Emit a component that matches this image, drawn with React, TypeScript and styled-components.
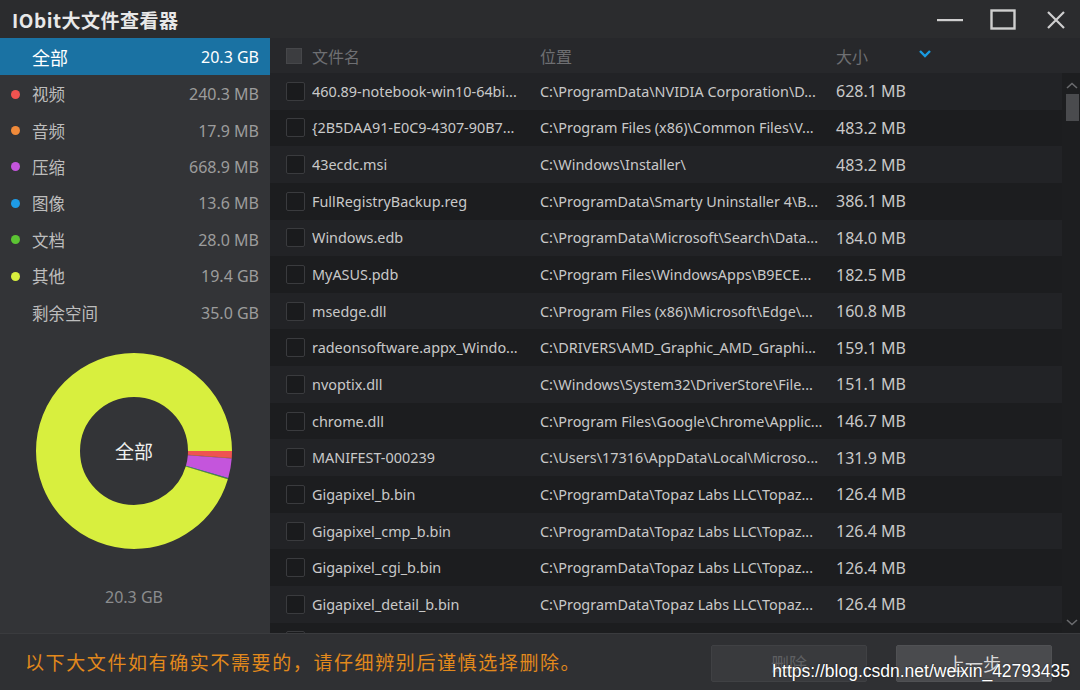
import React from 'react';
import styled, {createGlobalStyle} from 'styled-components';

const GlobalStyle = createGlobalStyle`
  html, body {
    margin: 0;
    padding: 0;
    background: #1d1e20;
  }
  * {
    box-sizing: border-box;
  }
`

const FONT = `"Noto Sans", "Noto Sans CJK SC", sans-serif`

type Category = { name: string, size: string, mb: number, color?: string }

const categories: Category[] = [
    {name: '视频', size: '240.3 MB', mb: 240.3, color: '#ef5350'},
    {name: '音频', size: '17.9 MB', mb: 17.9, color: '#f08a3a'},
    {name: '压缩', size: '668.9 MB', mb: 668.9, color: '#c455dc'},
    {name: '图像', size: '13.6 MB', mb: 13.6, color: '#1e9be6'},
    {name: '文档', size: '28.0 MB', mb: 28.0, color: '#5cc433'},
    {name: '其他', size: '19.4 GB', mb: 19.4 * 1024, color: '#d8ef3e'},
    {name: '剩余空间', size: '35.0 GB', mb: 0},
]

type FileRow = { name: string, path: string, size: string }

const topaz = 'C:\\ProgramData\\Topaz Labs LLC\\Topaz...'

const files: FileRow[] = [
    {name: '460.89-notebook-win10-64bi...', path: 'C:\\ProgramData\\NVIDIA Corporation\\D...', size: '628.1 MB'},
    {name: '{2B5DAA91-E0C9-4307-90B7...', path: 'C:\\Program Files (x86)\\Common Files\\V...', size: '483.2 MB'},
    {name: '43ecdc.msi', path: 'C:\\Windows\\Installer\\', size: '483.2 MB'},
    {name: 'FullRegistryBackup.reg', path: 'C:\\ProgramData\\Smarty Uninstaller 4\\B...', size: '386.1 MB'},
    {name: 'Windows.edb', path: 'C:\\ProgramData\\Microsoft\\Search\\Data...', size: '184.0 MB'},
    {name: 'MyASUS.pdb', path: 'C:\\Program Files\\WindowsApps\\B9ECE...', size: '182.5 MB'},
    {name: 'msedge.dll', path: 'C:\\Program Files (x86)\\Microsoft\\Edge\\...', size: '160.8 MB'},
    {name: 'radeonsoftware.appx_Windo...', path: 'C:\\DRIVERS\\AMD_Graphic_AMD_Graphi...', size: '159.1 MB'},
    {name: 'nvoptix.dll', path: 'C:\\Windows\\System32\\DriverStore\\File...', size: '151.1 MB'},
    {name: 'chrome.dll', path: 'C:\\Program Files\\Google\\Chrome\\Applic...', size: '146.7 MB'},
    {name: 'MANIFEST-000239', path: 'C:\\Users\\17316\\AppData\\Local\\Microso...', size: '131.9 MB'},
    {name: 'Gigapixel_b.bin', path: topaz, size: '126.4 MB'},
    {name: 'Gigapixel_cmp_b.bin', path: topaz, size: '126.4 MB'},
    {name: 'Gigapixel_cgi_b.bin', path: topaz, size: '126.4 MB'},
    {name: 'Gigapixel_detail_b.bin', path: topaz, size: '126.4 MB'},
    {name: 'Gigapixel_dn_b.bin', path: topaz, size: '126.4 MB'},
]

const Donut = () => {
    const r = 76
    const c = 2 * Math.PI * r
    const used = categories.filter(x => x.color)
    const total = used.reduce((s, x) => s + x.mb, 0)
    let acc = 0
    return (
        <svg width="200" height="200" viewBox="0 0 200 200">
            {used.map(seg => {
                const len = seg.mb / total * c
                const off = acc
                acc += len
                return <circle key={seg.name} cx="100" cy="100" r={r} fill="none" stroke={seg.color}
                               strokeWidth="44" strokeDasharray={`${len} ${c}`} strokeDashoffset={-off}/>
            })}
        </svg>
    )
}

const App = () => {
    return (
        <Window>
            <GlobalStyle/>
            <TitleBar>
                <Title>IObit大文件查看器</Title>
                <WinButtons>
                    <WinButton>
                        <svg width="26" height="4" viewBox="0 0 26 4"><rect x="0" y="1" width="26" height="2.2" fill="#cfcfcf"/></svg>
                    </WinButton>
                    <WinButton>
                        <svg width="26" height="22" viewBox="0 0 26 22"><rect x="1.5" y="1.5" width="23" height="18" fill="none" stroke="#cfcfcf" strokeWidth="2.4"/></svg>
                    </WinButton>
                    <WinButton>
                        <svg width="20" height="20" viewBox="0 0 20 20"><path d="M2 2 L18 18 M18 2 L2 18" stroke="#cfcfcf" strokeWidth="2.2"/></svg>
                    </WinButton>
                </WinButtons>
            </TitleBar>
            <Main>
                <Sidebar>
                    <AllRow>
                        <span>全部</span>
                        <AllValue>20.3 GB</AllValue>
                    </AllRow>
                    <CatList>
                        {categories.map(cat => (
                            <CatRow key={cat.name}>
                                <Dot color={cat.color}/>
                                <CatName>{cat.name}</CatName>
                                <CatValue>{cat.size}</CatValue>
                            </CatRow>
                        ))}
                    </CatList>
                    <ChartBox>
                        <Donut/>
                        <ChartLabel>全部</ChartLabel>
                    </ChartBox>
                    <ChartTotal>20.3 GB</ChartTotal>
                </Sidebar>
                <TablePane>
                    <HeaderRow>
                        <CheckCell><HeaderCheck/></CheckCell>
                        <NameCell>文件名</NameCell>
                        <PathCell>位置</PathCell>
                        <SizeCell>
                            大小
                            <SortIcon width="14" height="9" viewBox="0 0 14 9">
                                <path d="M2 2 L7 7 L12 2" fill="none" stroke="#1a9be0" strokeWidth="2.4"/>
                            </SortIcon>
                        </SizeCell>
                    </HeaderRow>
                    <Body>
                        <Rows>
                            {files.map((f, i) => (
                                <Row key={i} odd={i % 2 === 1}>
                                    <CheckCell><RowCheck/></CheckCell>
                                    <NameCell>{f.name}</NameCell>
                                    <PathCell>{f.path}</PathCell>
                                    <SizeCell>{f.size}</SizeCell>
                                </Row>
                            ))}
                        </Rows>
                        <ScrollBar>
                            <svg width="14" height="10" viewBox="0 0 14 10"><path d="M2 7 L7 2.5 L12 7" fill="none" stroke="#6a6b6e" strokeWidth="1.6"/></svg>
                            <Thumb/>
                            <Track/>
                            <svg width="14" height="10" viewBox="0 0 14 10"><path d="M2 3 L7 7.5 L12 3" fill="none" stroke="#6a6b6e" strokeWidth="1.6"/></svg>
                        </ScrollBar>
                    </Body>
                </TablePane>
            </Main>
            <Footer>
                <Warning>以下大文件如有确实不需要的，请仔细辨别后谨慎选择删除。</Warning>
                <Buttons>
                    <FooterButton disabled>删除</FooterButton>
                    <FooterButton primary>上一步</FooterButton>
                </Buttons>
                <Watermark>https://blog.csdn.net/weixin_42793435</Watermark>
            </Footer>
        </Window>
    );
};

const Window = styled.div`
  position: relative;
  width: 1080px;
  height: 690px;
  display: flex;
  flex-direction: column;
  overflow: hidden;
  font-family: ${FONT};
  background: #1d1e20;
`

const TitleBar = styled.div`
  height: 38px;
  flex: none;
  display: flex;
  align-items: center;
  justify-content: space-between;
  padding: 0 10px 0 12px;
  background: #2b2c2e;
`

const Title = styled.div`
  font-family: "Noto Sans CJK SC", sans-serif;
  font-weight: 700;
  font-size: 19px;
  color: #e8e8e8;
  letter-spacing: 0.5px;
`

const WinButtons = styled.div`
  display: flex;
  align-items: center;
  gap: 25px;
  margin-top: 1px;
`

const WinButton = styled.div`
  display: flex;
  align-items: center;
  justify-content: center;
  width: 28px;
  height: 24px;
`

const Main = styled.div`
  flex: none;
  height: 595px;
  display: flex;
`

const Sidebar = styled.div`
  width: 270px;
  flex: none;
  display: flex;
  flex-direction: column;
  background: #333437;
`

const AllRow = styled.div`
  height: 37px;
  display: flex;
  align-items: center;
  justify-content: space-between;
  padding: 0 11px 0 32px;
  background: #1a72a3;
  color: #ffffff;
  font-size: 18px;
`

const AllValue = styled.span`
  font-size: 16px;
`

const CatList = styled.div`
  display: flex;
  flex-direction: column;
  padding-top: 1px;
`

const CatRow = styled.div`
  height: 36.4px;
  display: flex;
  align-items: center;
  padding: 0 11px 0 11px;
`

const Dot = styled.span<{ color?: string }>`
  width: 9px;
  height: 9px;
  border-radius: 50%;
  background: ${p => p.color || 'transparent'};
  flex: none;
`

const CatName = styled.span`
  margin-left: 12px;
  font-size: 16.5px;
  color: #bdbdbd;
  flex: 1;
`

const CatValue = styled.span`
  font-size: 16px;
  color: #9c9c9c;
`

const ChartBox = styled.div`
  position: relative;
  align-self: flex-start;
  margin: 20px 0 0 34px;
  width: 200px;
  height: 200px;
  display: flex;
  align-items: center;
  justify-content: center;

  svg {
    display: block;
  }
`

const ChartLabel = styled.div`
  position: absolute;
  font-size: 19px;
  color: #f0f0f0;
`

const ChartTotal = styled.div`
  margin-top: 35px;
  text-align: center;
  font-size: 16px;
  color: #8b8c8e;
  padding-right: 2px;
`

const TablePane = styled.div`
  flex: 1;
  display: flex;
  flex-direction: column;
  background: #1d1e20;
  min-width: 0;
`

const HeaderRow = styled.div`
  height: 35px;
  flex: none;
  display: flex;
  align-items: center;
  background: #27282b;
  color: #6e6f72;
  font-size: 16px;
`

const CheckCell = styled.div`
  width: 42px;
  flex: none;
  display: flex;
  align-items: center;
  padding-left: 16px;
`

const HeaderCheck = styled.span`
  width: 16px;
  height: 16px;
  background: #3c3d40;
  border: 1px solid #46474a;
`

const RowCheck = styled.span`
  width: 19px;
  height: 19px;
  border: 1px solid #3a3b3e;
  border-radius: 2px;
  background: #1a1b1d;
`

const NameCell = styled.div`
  width: 228px;
  flex: none;
  white-space: nowrap;
  overflow: hidden;
`

const PathCell = styled.div`
  width: 296px;
  flex: none;
  white-space: nowrap;
  overflow: hidden;
`

const SizeCell = styled.div`
  flex: 1;
  display: flex;
  align-items: center;
  white-space: nowrap;
`

const SortIcon = styled.svg`
  margin-left: 50px;
  margin-top: -4px;
`

const Body = styled.div`
  flex: 1;
  display: flex;
  overflow: hidden;
  min-height: 0;
`

const Rows = styled.div`
  flex: 1;
  display: flex;
  flex-direction: column;
  overflow: hidden;
`

const Row = styled.div<{ odd: boolean }>`
  height: 36.65px;
  flex: none;
  display: flex;
  align-items: center;
  background: ${p => p.odd ? '#1c1d1f' : '#222326'};
  color: #c9c9c9;
  font-size: 14.4px;

  ${SizeCell} {
    font-size: 16px;
  }
`

const ScrollBar = styled.div`
  width: 18px;
  flex: none;
  display: flex;
  flex-direction: column;
  align-items: center;
  padding: 8px 0 6px 2px;
  background: #1d1e20;
`

const Thumb = styled.div`
  width: 13px;
  height: 27px;
  margin-top: 3px;
  background: #4a4b4e;
`

const Track = styled.div`
  flex: 1;
`

const Footer = styled.div`
  position: relative;
  flex: 1;
  display: flex;
  align-items: center;
  justify-content: space-between;
  padding: 0 28px 0 25px;
  background: #2f3033;
  border-top: 1px solid #3a3b3e;
`

const Warning = styled.div`
  font-size: 19px;
  color: #e2891c;
  letter-spacing: 1.6px;
`

const Buttons = styled.div`
  display: flex;
  gap: 29px;
  margin-top: 2px;
`

const FooterButton = styled.button<{ primary?: boolean }>`
  width: 156px;
  height: 37px;
  font-family: ${FONT};
  font-size: 18px;
  border: 1px solid ${p => p.primary ? '#505154' : '#404144'};
  border-radius: 2px;
  background: ${p => p.primary ? '#4a4b4e' : '#393a3d'};
  color: ${p => p.primary ? '#d8d8d8' : '#5e5f62'};
`

const Watermark = styled.div`
  position: absolute;
  right: 10px;
  bottom: 8px;
  font-family: "Liberation Sans", Arial, sans-serif;
  font-size: 17.5px;
  color: #ffffff;
  text-shadow: 0 0 2px rgba(0, 0, 0, 0.6);
`

export default App;
